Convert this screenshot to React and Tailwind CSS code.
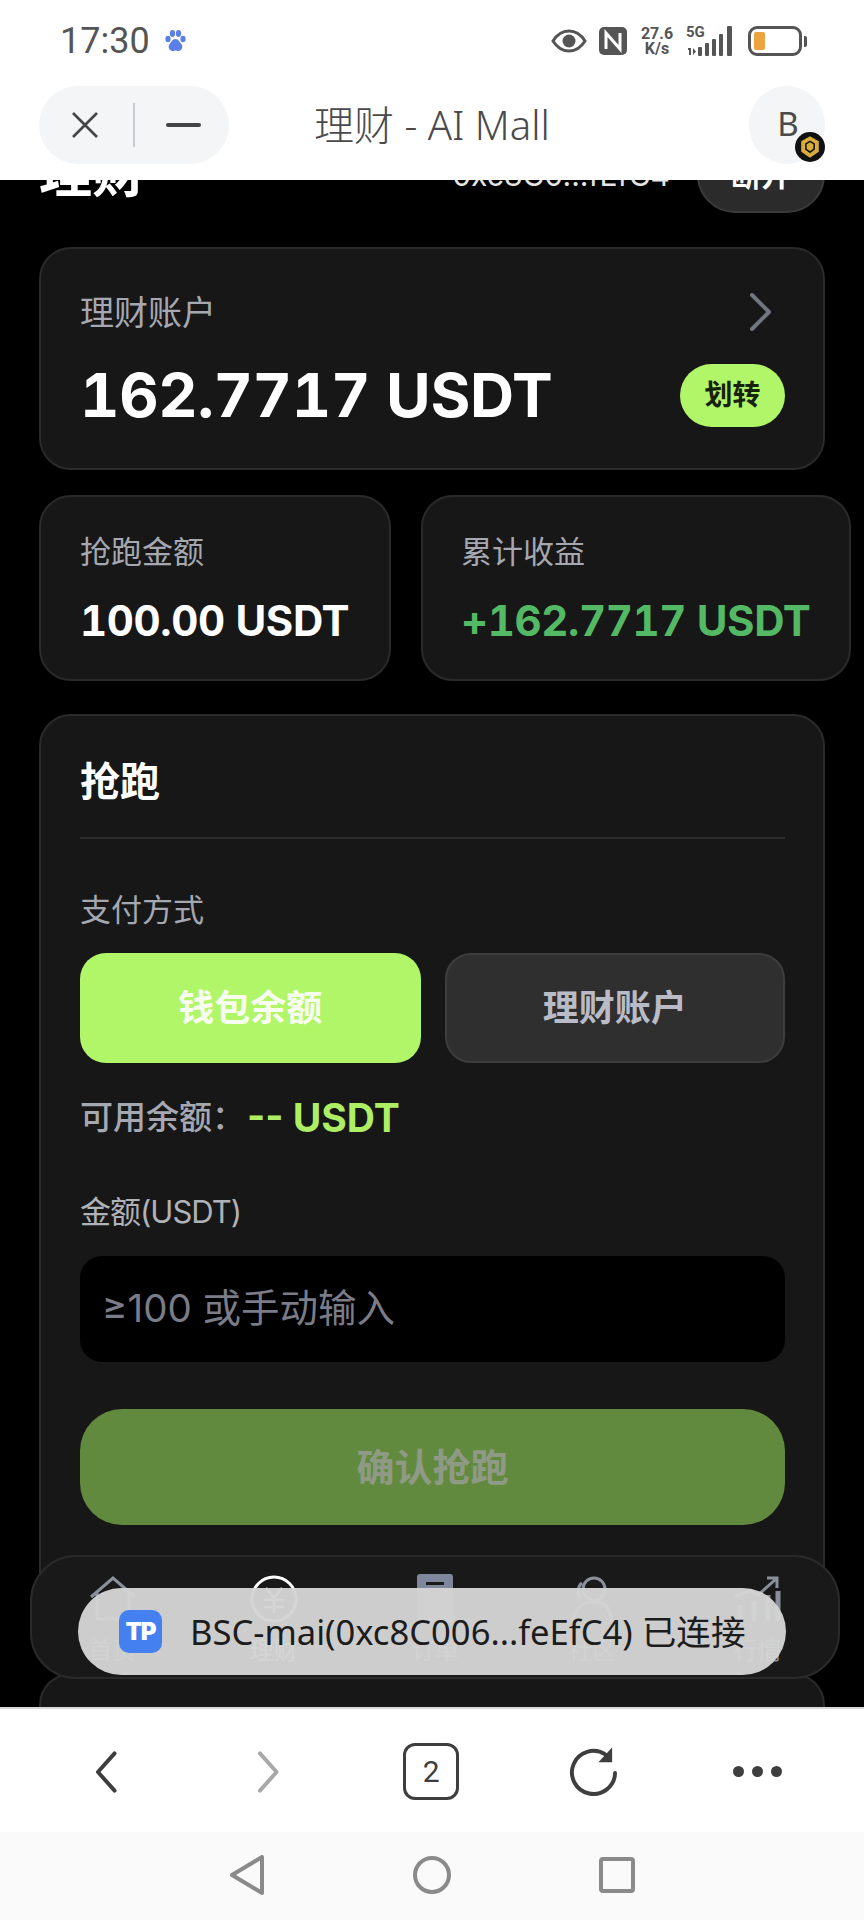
import React from "react";

const LIME = "bg-[#b1f569]";

function StatusBar() {
  return (
    <div className="h-[72px] bg-white flex items-center justify-between pl-[60px] pr-[57px] pt-[10px] text-[#555555]">
      <div className="flex items-center gap-[14px]">
        <span className="text-[36px] leading-none font-['Roboto',sans-serif]">17:30</span>
        <svg width="23" height="24" viewBox="0 0 23 24" fill="#5b7fe8">
          <ellipse cx="4" cy="10" rx="2.6" ry="3.2" />
          <ellipse cx="19" cy="10" rx="2.6" ry="3.2" />
          <ellipse cx="8.5" cy="4.5" rx="2.6" ry="3.4" />
          <ellipse cx="14.5" cy="4.5" rx="2.6" ry="3.4" />
          <path d="M11.5 10c-3 0-4 3-6 5-2 3 0 7 3 7 1.500 0 2-.5 3-.5s1.500.5 3 .5c3 0 5-4 3-7-2-2-3-5-6-5z" />
        </svg>
      </div>
      <div className="flex items-center">
        {/* eye */}
        <svg width="36" height="24" viewBox="0 0 36 24" fill="none" className="mr-[12px]">
          <path d="M2 12C7 4 12 2 18 2s11 2 16 10c-5 8-10 10-16 10S7 20 2 12z" stroke="#555555" strokeWidth="3" />
          <circle cx="18" cy="12" r="6.500" fill="#555555" />
        </svg>
        {/* nfc */}
        <svg width="28" height="28" viewBox="0 0 28 28" className="mr-[10px]">
          <rect width="28" height="28" rx="5" fill="#555555" />
          <path d="M7 22V6l14 16V6" fill="none" stroke="#ffffff" strokeWidth="3" />
        </svg>
        <div className="w-[40px] flex flex-col items-center text-[16px] leading-[15px] font-bold font-['Roboto',sans-serif] mr-[9px]">
          <span>27.6</span>
          <span>K/s</span>
        </div>
        <div className="w-[50px] relative h-[30px] mr-[12px]">
          <span className="absolute left-0 top-[-2px] text-[15px] leading-[16px] font-bold font-['Roboto',sans-serif]">5G</span>
          <svg width="50" height="30" viewBox="0 0 50 30" fill="#555555">
            <path d="M2 22h3v7H3v-5H2zM7 22l3 3.500-3 3.500z" />
            <rect x="12" y="21" width="4" height="9" rx="1" />
            <rect x="19" y="17" width="4" height="13" rx="1" />
            <rect x="26" y="13" width="4" height="17" rx="1" />
            <rect x="33" y="8" width="4" height="22" rx="1" />
            <rect x="41" y="0" width="5" height="30" rx="1" />
          </svg>
        </div>
        {/* battery */}
        <div className="w-[54px] h-[30px] rounded-[9px] border-[3px] border-[#555555] p-[3px] flex">
          <div className="w-[11px] h-full rounded-[2px] bg-[#eda33f]" />
        </div>
        <div className="w-[3px] h-[11px] bg-[#555555] rounded-r-[2px] ml-[2px]" />
      </div>
    </div>
  );
}

function TitleBar() {
  return (
    <div className="h-[108px] bg-white flex items-center pl-[39px] pr-[39px] pb-[2px] relative z-10">
      <div className="w-[190px] h-[78px] rounded-[39px] bg-[#f3f5f7] flex items-center pl-[33px]">
        <svg width="26" height="26" viewBox="0 0 26 26" fill="none" stroke="#444444" strokeWidth="2.600">
          <path d="M1 1l24 24M25 1L1 25" />
        </svg>
        <div className="w-[2px] h-[44px] bg-[#c9cbce] ml-[35px] mr-[31px]" />
        <div className="w-[35px] h-[4px] bg-[#444444] rounded-full" />
      </div>
      <div className="ml-[85px] mr-auto text-[40px] text-[#4a4a4a] font-light font-['Noto_Sans','Noto_Sans_CJK_SC',sans-serif] whitespace-nowrap">
        理财 - AI Mall
      </div>
      <div className="w-[76px] h-[78px] rounded-full bg-[#f3f5f7] relative flex items-center justify-center text-[33px] text-[#4a4a4a] font-['Noto_Sans',sans-serif]">
        <span className="-mt-[2px] ml-[2px]">B</span>
        <svg width="30" height="30" viewBox="0 0 29 29" className="absolute right-[0px] bottom-[2px]">
          <circle cx="14.500" cy="14.500" r="14.500" fill="#111111" />
          <path d="M14.500 4l8.500 5v10l-8.500 6-8.500-6V9z" fill="#d8ad3a" />
          <path d="M14.500 9l4 2.500v5l-4 3-4-3v-5z" fill="none" stroke="#111111" strokeWidth="1.500" />
        </svg>
      </div>
    </div>
  );
}

function Card({ className = "", children }) {
  return (
    <div className={`bg-[#171717] border-2 border-[#2a2a2a] rounded-[32px] ${className}`}>
      {children}
    </div>
  );
}

function TabBar() {
  return (
    <div className="absolute left-[30px] top-[1375px] w-[810px] h-[124px] rounded-[46px] bg-[#191919] border-2 border-[#2a2a2a] grid grid-cols-5 text-[24px]">
      <div className="flex flex-col items-center pt-[18px] text-[#8a8f99]">
        <svg width="50" height="46" viewBox="0 0 50 46" fill="none" stroke="#8a8f99" strokeWidth="3">
          <path d="M3 22L25 3l22 19M9 18v26h32V18" />
        </svg>
        <span className="mt-[12px]">首页</span>
      </div>
      <div className="flex flex-col items-center pt-[18px] text-white">
        <svg width="48" height="48" viewBox="0 0 48 48" fill="none" stroke="#ffffff" strokeWidth="3">
          <circle cx="24" cy="24" r="22" />
          <path d="M16 13l8 10 8-10M14 25h20M14 32h20M24 23v15" strokeWidth="2.500" />
        </svg>
        <span className="mt-[10px]">理财</span>
      </div>
      <div className="flex flex-col items-center pt-[17px] text-[#8a8f99]">
        <svg width="36" height="48" viewBox="0 0 36 48">
          <rect width="36" height="48" rx="3" fill="#7f879c" />
          <rect x="9" y="8" width="18" height="3" fill="#191919" />
        </svg>
        <span className="mt-[11px]">订单</span>
      </div>
      <div className="flex flex-col items-center pt-[18px] pr-[8px] text-[#8a8f99]">
        <svg width="46" height="48" viewBox="0 0 46 48" fill="none" stroke="#8a8f99" strokeWidth="3">
          <circle cx="25" cy="14" r="11" />
          <path d="M13 8C8 12 8 20 12 24M5 46c0-12 8-19 20-19s17 7 17 19" />
        </svg>
        <span className="mt-[10px]">社区</span>
      </div>
      <div className="flex flex-col items-center pt-[18px] text-[#8a8f99]">
        <svg width="50" height="48" viewBox="0 0 50 48" fill="none" stroke="#8a8f99" strokeWidth="3">
          <path d="M3 22l14-6 9 4 18-16M35 3h10v10" />
          <path d="M8 46V30M22 46V26M36 46V20M46 46V16" strokeWidth="5" />
        </svg>
        <span className="mt-[10px]">行情</span>
      </div>
    </div>
  );
}

function Toast() {
  return (
    <div className="absolute left-[78px] top-[1408px] w-[708px] h-[87px] rounded-full bg-[#d4d4d4]/97 flex items-center pl-[41px] gap-[28px] text-[34.600px] text-[#1c1c1c] font-['Noto_Sans','Noto_Sans_CJK_SC',sans-serif]">
      <div className="w-[43px] h-[43px] rounded-[10px] bg-[#4480f0] flex items-center justify-center text-white text-[24px] font-black tracking-[-1px] font-['Inter',sans-serif]">
        TP
      </div>
      <span className="whitespace-nowrap">BSC-mai(0xc8C006...feEfC4) 已连接</span>
    </div>
  );
}

function BrowserBar() {
  return (
    <div className="h-[125px] bg-white border-t-2 border-[#d9d9d9] flex items-center justify-between pl-[95px] pr-[82px] pt-[2px]">
      <svg width="22" height="42" viewBox="0 0 22 42" fill="none" stroke="#3e3e3e" strokeWidth="4" strokeLinecap="round" strokeLinejoin="round">
        <path d="M20 2L3 21l17 19" />
      </svg>
      <svg width="22" height="42" viewBox="0 0 22 42" fill="none" stroke="#a8a8a8" strokeWidth="4" strokeLinecap="round" strokeLinejoin="round" className="ml-[141px]">
        <path d="M2 2l17 19L2 40" />
      </svg>
      <div className="w-[57px] h-[57px] rounded-[12px] border-[3px] border-[#3e3e3e] flex items-center justify-center text-[30px] text-[#3e3e3e] ml-[124px] font-['Roboto',sans-serif]">
        2
      </div>
      <svg width="52" height="52" viewBox="0 0 52 52" fill="none" className="ml-[110px]">
        <path d="M47 27a22 22 0 1 1-10-19" stroke="#3e3e3e" strokeWidth="4" strokeLinecap="round" />
        <path d="M44 1v15H30z" fill="#3e3e3e" />
      </svg>
      <div className="flex gap-[8px] ml-[113px]">
        <div className="w-[11px] h-[11px] rounded-full bg-[#3e3e3e]" />
        <div className="w-[11px] h-[11px] rounded-full bg-[#3e3e3e]" />
        <div className="w-[11px] h-[11px] rounded-full bg-[#3e3e3e]" />
      </div>
    </div>
  );
}

function NavBar() {
  return (
    <div className="h-[88px] bg-[#fafafa] flex items-center justify-center gap-[148px] pb-[3px]">
      <svg width="36" height="40" viewBox="0 0 36 40" fill="none" stroke="#8a8a8a" strokeWidth="4" strokeLinejoin="round">
        <path d="M33 2v36L3 20z" />
      </svg>
      <svg width="38" height="40" viewBox="0 0 38 40" fill="none" stroke="#8a8a8a" strokeWidth="4">
        <circle cx="19" cy="20" r="17" />
      </svg>
      <svg width="36" height="36" viewBox="0 0 36 36" fill="none" stroke="#8a8a8a" strokeWidth="4" strokeLinejoin="round">
        <rect x="2" y="2" width="32" height="32" rx="2" />
      </svg>
    </div>
  );
}

export default function App() {
  return (
    <div className="w-[864px] h-[1920px] flex flex-col overflow-hidden bg-black font-['Inter','Noto_Sans_CJK_SC',sans-serif]">
      <StatusBar />
      <TitleBar />

      <main className="relative h-[1527px] overflow-hidden bg-black">
        <div className="pl-[39px] w-[825px] -mt-[43px]">
          {/* page header, scrolled under the title bar */}
          <div className="h-[76px] flex items-center justify-between">
            <span className="text-[53px] font-bold text-white">理财</span>
            <div className="flex items-center gap-[27px]">
              <span className="text-[30px] text-[#e5e5e5]">0xc8C0...fEfC4</span>
              <div className="w-[128px] h-[76px] rounded-[38px] bg-[#2b2b2b] border-2 border-[#3a3a3a] flex items-center justify-center text-[30px] font-semibold text-white">
                断开
              </div>
            </div>
          </div>

          <Card className="mt-[34px] h-[223px] pl-[39px] pr-[38px] pt-[41px]">
            <div className="h-[44px] flex items-center justify-between pr-[13px]">
              <span className="text-[34px] text-[#a5a8b0]">理财账户</span>
              <svg width="22" height="38" viewBox="0 0 22 38" fill="none" stroke="#71757f" strokeWidth="4" strokeLinecap="round" strokeLinejoin="round">
                <path d="M2 2l17 17L2 36" />
              </svg>
            </div>
            <div className="mt-[23px] h-[76px] flex items-center justify-between">
              <span className="text-[61px] font-bold text-white leading-none tabular-nums tracking-[-0.3px]">162.7717 USDT</span>
              <div className={`w-[105px] h-[63px] rounded-full ${LIME} flex items-center justify-center text-[28px] font-bold text-[#16220c]`}>
                划转
              </div>
            </div>
          </Card>

          <div className="mt-[25px] flex gap-[30px] w-[812px]">
            <Card className="w-[352px] shrink-0 h-[186px] pl-[39px] pt-[33px]">
              <div className="h-[44px] flex items-center text-[31px] text-[#a5a8b0]">抢跑金额</div>
              <div className="mt-[18px] h-[56px] flex items-center text-[42px] font-bold text-white whitespace-nowrap tabular-nums tracking-[-0.4px]">100.00 USDT</div>
            </Card>
            <Card className="w-[430px] shrink-0 h-[186px] pl-[38px] pt-[33px]">
              <div className="h-[44px] flex items-center text-[31px] text-[#a5a8b0]">累计收益</div>
              <div className="mt-[18px] h-[56px] flex items-center text-[42px] font-bold text-[#53b964] whitespace-nowrap tabular-nums tracking-[-0.4px]">+162.7717 USDT</div>
            </Card>
          </div>

          <Card className="mt-[33px] pl-[39px] pr-[38px] pt-[40px] pb-[113px]">
            <div className="h-[52px] flex items-center text-[40px] font-bold text-white">抢跑</div>
            <div className="mt-[29px] h-[2px] bg-[#2d2d2d]" />
            <div className="mt-[49px] h-[44px] flex items-center text-[31px] text-[#a5a8b0]">支付方式</div>
            <div className="mt-[21px] grid grid-cols-2 gap-[24px] h-[110px]">
              <div className={`rounded-[26px] ${LIME} flex items-center justify-center text-[36px] font-bold text-white/90`}>
                钱包余额
              </div>
              <div className="rounded-[26px] bg-[#2f2f2f] border-2 border-[#3d3d3d] flex items-center justify-center text-[36px] font-semibold text-[#b9bbc6]">
                理财账户
              </div>
            </div>
            <div className="mt-[32px] h-[46px] flex items-center text-[33px] text-[#a5a8b0] font-medium">
              <span>可用余额：</span>
              <span className="ml-[2px] text-[39px] font-bold text-[#aeee64]">-- USDT</span>
            </div>
            <div className="mt-[49px] h-[44px] flex items-center text-[31px] tracking-[-1px] text-[#b0b2b8]">金额(USDT)</div>
            <input
              readOnly
              placeholder="≥100 或手动输入"
              className="mt-[22px] w-full h-[106px] rounded-[22px] bg-black pl-[22px] pb-[2px] text-[38.500px] outline-none placeholder:text-[#7a7c88]"
            />
            <div className="mt-[47px] h-[116px] rounded-[42px] bg-[#628a3f] flex items-center justify-center text-[38px] font-bold text-[#8f9a86]">
              确认抢跑
            </div>
          </Card>

          <Card className="mt-[33px] h-[300px]" />
        </div>

        <TabBar />
        <Toast />
      </main>

      <BrowserBar />
      <NavBar />
    </div>
  );
}
